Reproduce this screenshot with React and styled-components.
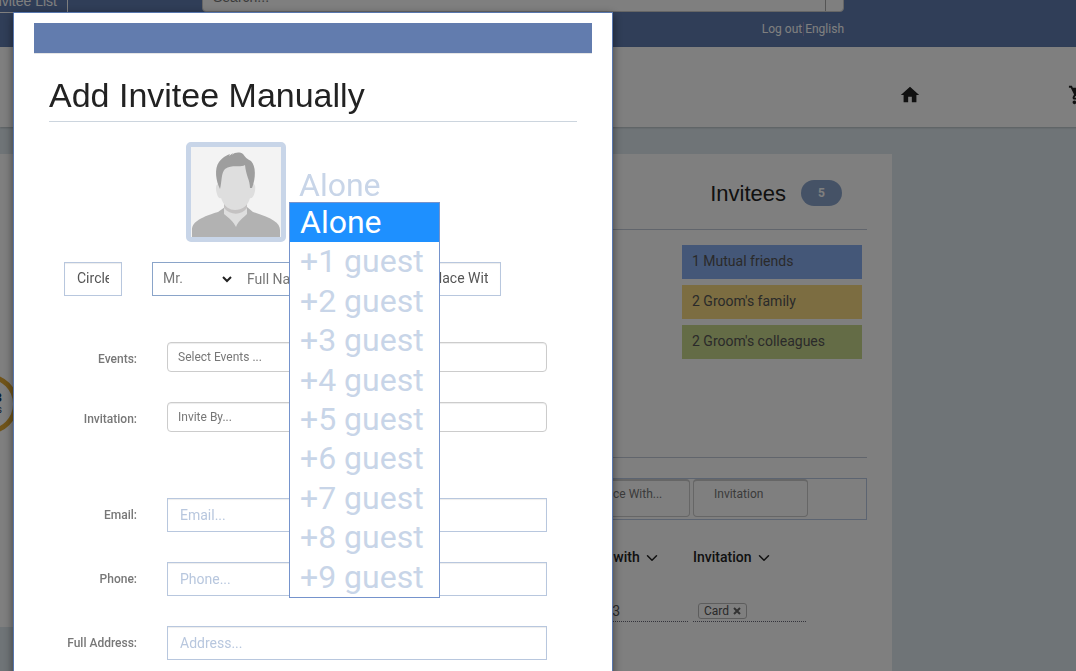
import React from "react";
import styled, { createGlobalStyle, css } from "styled-components";
import { ChevronDown } from "lucide-react";
import { MdHome, MdShoppingCart } from "react-icons/md";

const GlobalStyle = createGlobalStyle`
  * { box-sizing: border-box; }
  body {
    margin: 0;
    font-family: Roboto, "Liberation Sans", sans-serif;
    font-size: 14px;
    line-height: 20px;
    color: #333;
    background: #dfe9ef;
  }
  input, select, button { font-family: inherit; }
  h1, h2, ul { margin: 0; padding: 0; font-weight: 400; }
`;

/* ---------- page behind the dialog ---------- */

const Page = styled.div`
  height: 100vh;
  overflow: hidden;
`;

const TopBar = styled.header`
  display: flex;
  flex-direction: column;
  height: 47px;
  background: #607cb0;
`;

const TopRow = styled.div`
  display: flex;
  align-items: flex-end;
  height: 12px;
`;

const NavTab = styled.a`
  display: flex;
  align-items: flex-end;
  justify-content: flex-end;
  width: 68px;
  height: 32px;
  padding: 0 10px 3px 0;
  border: 1px solid #fff;
  border-width: 0 1px 1px 0;
  margin-bottom: -1px;
  color: #fff;
  font-size: 14px;
  line-height: 16px;
  font-family: "Liberation Sans", sans-serif;
  white-space: nowrap;
  text-decoration: none;
`;

const SearchGroup = styled.form`
  display: flex;
  width: 642px;
  height: 30px;
  margin-left: 134px;
  border: 1px solid #ccc;
  border-radius: 4px;
  background: #fff;
`;

const SearchInput = styled.input`
  flex: 1;
  min-width: 0;
  border: 0;
  padding: 0 10px;
  background: none;
  color: #333;
  font: 14px "Liberation Sans", sans-serif;
  &::placeholder { color: #777; }
`;

const SearchButton = styled.button`
  width: 18px;
  border: 0;
  border-left: 1px solid #aaa;
  background: none;
  padding: 0;
`;

const Links = styled.nav`
  display: flex;
  align-items: center;
  justify-content: flex-end;
  height: 34px;
  padding-right: 232px;
  font-size: 12px;
`;

const TopLink = styled.a`
  color: #fff;
  text-decoration: none;
  & + & {
    margin-left: 1px;
    padding-left: 1px;
    border-left: 1px solid #9488b8;
    line-height: 14px;
  }
`;

const SiteHeader = styled.div`
  display: flex;
  align-items: center;
  justify-content: flex-end;
  gap: 147px;
  height: 80px;
  padding-top: 16px;
  margin-right: -14px;
  background: #fff;
  box-shadow: 0 1px 2px rgba(0, 0, 0, 0.2);
  color: #222;
`;

const Content = styled.main`
  display: flex;
  align-items: flex-start;
  gap: 26px;
  padding: 27px 184px 0 0;
`;

const SideCard = styled.aside`
  display: flex;
  width: 68px;
  height: 473px;
  flex: none;
  background: #fff;
  overflow: hidden;
  align-items: center;
`;

const Ring = styled.div`
  flex: none;
  display: flex;
  flex-direction: column;
  align-items: flex-end;
  justify-content: center;
  width: 60px;
  height: 60px;
  margin: 26px 0 0 -42px;
  padding-right: 11px;
  border: 5px solid #e0a834;
  border-radius: 50%;
  color: #123a66;
  font-size: 10px;
  line-height: 12px;
  b { font-size: 13px; }
`;

const Panel = styled.section`
  flex: 1;
  min-width: 0;
  min-height: 560px;
  padding: 0 25px;
  background: #fff;
`;

const PanelHeader = styled.div`
  display: flex;
  align-items: center;
  justify-content: flex-end;
  gap: 15px;
  height: 76px;
  padding: 3px 25px 0 0;
  border-bottom: 1px solid #c2cad8;
`;

const PanelTitle = styled.h2`
  padding-top: 2px;
  font: 22px/26px "Liberation Sans", sans-serif;
  color: #222;
`;

const Count = styled.span`
  width: 41px;
  border-radius: 13px;
  background: #8ba5cc;
  color: #fff;
  font-size: 12px;
  font-weight: 700;
  line-height: 26px;
  text-align: center;
`;

const Groups = styled.div`
  display: flex;
  flex-direction: column;
  align-items: flex-end;
  gap: 6px;
  height: 228px;
  padding: 15px 5px 0 0;
  border-bottom: 1px solid #c2cad8;
`;

const Group = styled.div`
  width: 180px;
  padding: 0 10px;
  background: ${(p) => p.$color};
  color: #555;
  line-height: 32px;
  height: 34px;
`;

const Filters = styled.div`
  display: flex;
  justify-content: flex-end;
  gap: 3px;
  height: 42px;
  margin: 20px 0 27px;
  padding-right: 58px;
  border: 1px solid #b8c8e2;
`;

const Filter = styled.input`
  width: 115px;
  height: 38px;
  padding: 0 20px 10px;
  border: 1px solid #ccc;
  border-width: 2px 1px 1px;
  border-radius: 4px;
  background: none;
  font-size: 12px;
  color: #777;
  &::placeholder { color: #777; opacity: 1; }
`;

const GuestTable = styled.table`
  width: 236px;
  margin: 0 56px 0 auto;
  border-collapse: collapse;
  table-layout: fixed;
  th {
    height: 20px;
    padding: 0;
    color: #222;
    font-weight: 500;
    text-align: left;
    white-space: nowrap;
  }
  td {
    height: 55px;
    padding: 0 5px 0 0;
    vertical-align: bottom;
  }
`;

const SortIcon = styled(ChevronDown)`
  vertical-align: middle;
`;

const Underlined = styled.div`
  display: flex;
  align-items: center;
  height: 22px;
  padding-left: ${(p) => p.$pad || 0}px;
  border-bottom: 1px dotted #667;
  color: #555;
`;

const Tag = styled.button`
  height: 16px;
  padding: 0 5px;
  border: 1px solid #bbb;
  border-radius: 3px;
  background: none;
  color: #555;
  font-size: 12px;
  line-height: 14px;
  svg { margin-left: 4px; }
`;

/* ---------- dialog ---------- */

const Backdrop = styled.div`
  position: fixed;
  inset: 0;
  overflow: hidden;
  padding: 12px 13px 0;
  background: rgba(0, 0, 0, 0.5);
`;

const Dialog = styled.div`
  max-width: 600px;
  min-height: 760px;
  padding: 10px 20px;
  border: 1px solid #5877ae;
  background: #fff;
  box-shadow: 0 3px 9px rgba(0, 0, 0, 0.5);
`;

const DialogBar = styled.div`
  height: 30px;
  background: #627cae;
  border-bottom: 1px solid #e5e5e5;
  box-sizing: content-box;
`;

const DialogBody = styled.div`
  padding: 21px 15px;
`;

const Title = styled.h1`
  padding-bottom: 6px;
  margin-bottom: 20px;
  border-bottom: 1px solid #ccd5de;
  color: #222;
  font: 34px/40px "Liberation Sans", sans-serif;
`;

const Profile = styled.div`
  display: flex;
  align-items: flex-start;
  gap: 3px;
  margin: 0 0 20px 137px;
`;

const Photo = styled.svg`
  width: 100px;
  height: 100px;
  border: 5px solid #c8d5e8;
  border-radius: 5px;
  background: #f3f3f3;
`;

const GuestPicker = styled.div`
  position: relative;
  padding-top: 24px;
`;

const guestText = css`
  font-size: 32px;
  font-family: Roboto, sans-serif;
  color: #c8d5e8;
`;

const GuestSelect = styled.select`
  ${guestText}
  display: block;
  width: 151px;
  height: 38px;
  padding: 0 0 0 10px;
  border: 0;
  background: none;
  appearance: none;
`;

const Menu = styled.ul`
  ${guestText}
  position: absolute;
  top: 60px;
  left: 0;
  z-index: 1;
  display: grid;
  grid-template-rows: repeat(10, 1fr);
  width: 151px;
  height: 396px;
  border: 1px solid #7593cc;
  background: #fff;
  list-style: none;
`;

const Option = styled.li`
  padding-left: 10px;
  line-height: 39px;
  white-space: nowrap;
  &[aria-selected="true"] {
    background: #1e90ff;
    color: #fff;
  }
`;

const NameRow = styled.div`
  display: flex;
  gap: 30px;
  margin: 0 0 46px 15px;
`;

const boxed = css`
  height: 34px;
  border: 1px solid #b8c7de;
  background: #fff;
  box-shadow: inset 0 1px 1px rgba(0, 0, 0, 0.075);
  font-size: 14px;
  color: #555;
  min-width: 0;
`;

const ShortInput = styled.input`
  ${boxed}
  width: ${(p) => p.$width}px;
  padding: 0 12px 2px;
  &::placeholder { color: #555; opacity: 1; }
`;

const NameGroup = styled.div`
  ${boxed}
  display: flex;
  align-items: center;
  width: 235px;
  border-color: #8aa4c9;
  box-shadow: none;
`;

const SelectWrap = styled.div`
  display: flex;
  align-items: center;
  width: 82px;
`;

const Salutation = styled.select`
  width: 82px;
  margin-right: -13px;
  padding: 0 0 2px 10px;
  border: 0;
  background: none;
  appearance: none;
  font-size: 14px;
  color: #777;
`;

const SelectArrow = styled.svg`
  flex: none;
  pointer-events: none;
`;

const NameInput = styled.input`
  flex: 1;
  min-width: 0;
  padding: 0 12px;
  border: 0;
  background: none;
  font-size: 14px;
  &::placeholder { color: #777; opacity: 1; }
`;

const Field = styled.div`
  display: grid;
  grid-template-columns: 88px 1fr;
  gap: 30px;
  align-items: center;
  margin: 0 30px 30px 0;
`;

const Label = styled.label`
  color: #777;
  font-size: 12px;
  font-weight: 500;
  text-align: right;
  padding-top: ${(p) => (p.$low ? 4 : 0)}px;
`;

const PickInput = styled.input`
  height: 30px;
  min-width: 0;
  padding: 0 10px;
  border: 1px solid #ccc;
  border-radius: 4px;
  box-shadow: inset 0 1px 1px rgba(0, 0, 0, 0.075);
  font-size: 12px;
  &::placeholder { color: #777; opacity: 1; }
`;

const TextInput = styled.input`
  ${boxed}
  padding: 0 12px;
  &::placeholder { color: #b8c7de; opacity: 1; }
`;

const Picks = styled.div`
  margin-bottom: 66px;
`;

const guests = ["Alone", ...Array.from({ length: 9 }, (_, i) => `+${i + 1} guest`)];
const groups = [
  ["1 Mutual friends", "#89aef0"],
  ["2 Groom's family", "#f8da82"],
  ["2 Groom's colleagues", "#c9d88c"],
];

function Silhouette() {
  return (
    <Photo viewBox="0 0 90 90" role="img" aria-label="Profile photo">
      <path d="M1 90V83C1 76 7 71 27 65L34 60H56L62 65C81 71 89 76 89 83V90Z" fill="#b2b2b2" />
      <path d="M33 56H56V66L45 78L33 66Z" fill="#c4c2c2" />
      <path d="M33 61V67C38 71 42 74 45 80C47 74 52 71 56 67V61C50 69 39 68 33 61Z" fill="#dedede" />
      <path d="M29 37C25 36 24 40 26 47C27 51 29 52 30 51C33 60 39 63 44 63C51 63 57 59 59 51C61 52 63 49 64 44C65 38 63 36 61 37L58 18H32Z" fill="#dedede" />
      <path d="M29 42C25 34 23 22 28 15C32 10 36 8 39 7L38 9L42 6L41 8C44 5 49 5 52 7C54 10 56 12 60 14C65 19 65 31 61 41H59C59 33 55 29 54 18C49 21 41 17 34 22C30 26 31 34 29 42Z" fill="#9e9e9e" />
    </Photo>
  );
}

export default function App() {
  return (
    <>
      <GlobalStyle />
      <Page>
        <TopBar>
          <TopRow>
            <NavTab href="#list">Invitee List</NavTab>
            <SearchGroup>
              <SearchInput aria-label="Search" placeholder="Search..." />
              <SearchButton type="button" aria-label="Search" />
            </SearchGroup>
          </TopRow>
          <Links>
            <TopLink href="#logout">Log out</TopLink>
            <TopLink href="#language">English</TopLink>
          </Links>
        </TopBar>
        <SiteHeader>
          <MdHome size={22} />
          <MdShoppingCart size={22} />
        </SiteHeader>
        <Content>
          <SideCard>
            <Ring>
              <b>3</b>
              <span>s</span>
            </Ring>
          </SideCard>
          <Panel>
            <PanelHeader>
              <PanelTitle>Invitees</PanelTitle>
              <Count>5</Count>
            </PanelHeader>
            <Groups>
              {groups.map(([name, color]) => (
                <Group key={name} $color={color}>{name}</Group>
              ))}
            </Groups>
            <Filters>
              <Filter aria-label="Place with filter" placeholder="Place With..." />
              <Filter aria-label="Invitation filter" placeholder="Invitation" />
            </Filters>
            <GuestTable>
              <thead>
                <tr>
                  <th>Place with <SortIcon size={18} /></th>
                  <th>Invitation <SortIcon size={18} /></th>
                </tr>
              </thead>
              <tbody>
                <tr>
                  <td><Underlined>Table 3</Underlined></td>
                  <td>
                    <Underlined $pad={5}>
                      <Tag type="button">
                        Card
                        <svg width="8" height="8" viewBox="0 0 8 8" aria-hidden="true">
                          <path d="M1 1L7 7M7 1L1 7" stroke="#666" strokeWidth="2" />
                        </svg>
                      </Tag>
                    </Underlined>
                  </td>
                </tr>
              </tbody>
            </GuestTable>
          </Panel>
        </Content>
      </Page>

      <Backdrop>
        <Dialog role="dialog" aria-labelledby="dialog-title">
          <DialogBar />
          <DialogBody>
            <Title id="dialog-title">Add Invitee Manually</Title>
            <Profile>
              <Silhouette />
              <GuestPicker>
                <GuestSelect aria-label="Guests" defaultValue="Alone">
                  {guests.map((g) => <option key={g}>{g}</option>)}
                </GuestSelect>
                <Menu role="listbox" aria-label="Guests">
                  {guests.map((g, i) => (
                    <Option key={g} role="option" aria-selected={i === 0}>{g}</Option>
                  ))}
                </Menu>
              </GuestPicker>
            </Profile>
            <NameRow>
              <ShortInput $width={58} aria-label="Circle" placeholder="Circle" />
              <NameGroup>
                <SelectWrap>
                  <Salutation aria-label="Salutation" defaultValue="Mr.">
                    <option>Mr.</option>
                    <option>Mrs.</option>
                  </Salutation>
                  <SelectArrow width="10" height="8" viewBox="0 0 10 8" aria-hidden="true">
                    <path d="M1 2L5 6L9 2" fill="none" stroke="#222" strokeWidth="2" />
                  </SelectArrow>
                </SelectWrap>
                <NameInput aria-label="Full name" placeholder="Full Name" />
              </NameGroup>
              <ShortInput $width={84} aria-label="Place with" placeholder="Place With" />
            </NameRow>
            <Picks>
              <Field>
                <Label $low htmlFor="events">Events:</Label>
                <PickInput id="events" placeholder="Select Events ..." />
              </Field>
              <Field>
                <Label $low htmlFor="invitation">Invitation:</Label>
                <PickInput id="invitation" placeholder="Invite By..." />
              </Field>
            </Picks>
            <Field>
              <Label htmlFor="email">Email:</Label>
              <TextInput id="email" type="email" placeholder="Email..." />
            </Field>
            <Field>
              <Label htmlFor="phone">Phone:</Label>
              <TextInput id="phone" type="tel" placeholder="Phone..." />
            </Field>
            <Field>
              <Label htmlFor="address">Full Address:</Label>
              <TextInput id="address" placeholder="Address..." />
            </Field>
          </DialogBody>
        </Dialog>
      </Backdrop>
    </>
  );
}
